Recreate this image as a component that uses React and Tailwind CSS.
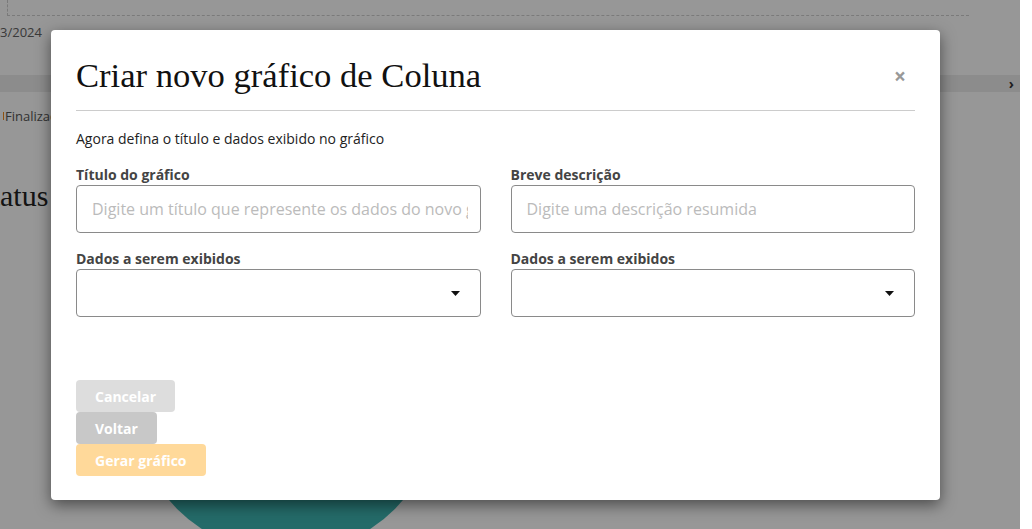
import React from 'react';

const Caret = () => (
  <svg width="9" height="5" viewBox="0 0 9 5" className="shrink-0">
    <path d="M0 0h9L4.5 5z" fill="#111" />
  </svg>
);

const Field = ({ label, placeholder }) => (
  <div className="flex flex-col">
    <label className="text-[14px] leading-[21px] font-bold text-[#444]">{label}</label>
    <input
      type="text"
      placeholder={placeholder}
      className="h-[48px] w-full rounded-[4px] border border-[#8a8a8a] bg-white pl-[15px] pr-[12px] text-[16px] text-[#333] placeholder:text-[#bbb] focus:outline-none"
    />
  </div>
);

const SelectField = ({ label }) => (
  <div className="flex flex-col">
    <label className="text-[14px] leading-[21px] font-bold text-[#444]">{label}</label>
    <div className="flex h-[48px] items-center justify-end rounded-[4px] border border-[#8a8a8a] bg-white pr-[20px]">
      <Caret />
    </div>
  </div>
);

const App = () => {
  return (
    <div className="flex h-[529px] w-full overflow-hidden bg-white font-['Open_Sans',sans-serif]">
      <div className="relative h-full w-[1020px] shrink-0 overflow-hidden bg-white">
        {/* page behind the modal */}
        <div className="ml-[7px] mr-[51px] h-[16px] border-b border-l border-dashed border-[#cfcfcf]" />
        <div className="mt-[7px] text-[13px] leading-[18px] text-[#626262]">3/2024</div>
        <div className="mt-[34px] flex h-[17px] items-center justify-end bg-[#ececec] pr-[6px] text-[14px] font-bold text-[#333]">›</div>
        <div className="mt-[16px] ml-[3px] flex items-center gap-[1px] text-[13px] leading-[16px] text-[#555]">
          <span className="h-[8px] w-[1px] bg-[#f08a1a]" />
          Finalizad
        </div>
        <div className="mt-[55px] -ml-[25px] font-['Liberation_Serif',serif] text-[30px] leading-[34px] text-[#222]">Status</div>
        <div className="mt-[33px] ml-[132px] h-[308px] w-[308px] rounded-full bg-[#3db5b1]" />

        {/* overlay */}
        <div className="absolute inset-0 bg-black/[0.408]">
          <div className="ml-[51px] mt-[30px] w-[889px] rounded-[4px] bg-white px-[25px] pb-[24px] shadow-[0_5px_15px_rgba(0,0,0,0.5)]">
            <div className="flex items-center justify-between border-b border-[#cccccc] pt-[25px] pb-[15px]">
              <h2 className="font-['Liberation_Serif',serif] text-[34.6px] leading-[40px] text-[#111]">Criar novo gráfico de Coluna</h2>
              <button className="mr-[9px] mt-[3px] text-[21px] font-bold leading-none text-[#999]">×</button>
            </div>

            <p className="mt-[18px] text-[14px] leading-[20px] text-[#222]">Agora defina o título e dados exibido no gráfico</p>

            <div className="mt-[15px] grid grid-cols-2 gap-x-[30px] gap-y-[15px]">
              <Field label="Título do gráfico" placeholder="Digite um título que represente os dados do novo gráfico" />
              <Field label="Breve descrição" placeholder="Digite uma descrição resumida" />
              <SelectField label="Dados a serem exibidos" />
              <SelectField label="Dados a serem exibidos" />
            </div>

            <div className="mt-[63px] flex flex-col items-start">
              <button className="h-[32px] rounded-[4px] bg-[#dddddd] px-[19px] text-[14px] font-bold text-white">Cancelar</button>
              <button className="h-[32px] rounded-[4px] bg-[#c8c8c8] px-[19px] text-[14px] font-bold text-white">Voltar</button>
              <button className="h-[32px] rounded-[4px] bg-[#ffd99a] px-[19px] text-[14px] font-bold text-white">Gerar gráfico</button>
            </div>
          </div>
        </div>
      </div>
      <div className="h-full flex-1 bg-white" />
    </div>
  );
};

export default App;
